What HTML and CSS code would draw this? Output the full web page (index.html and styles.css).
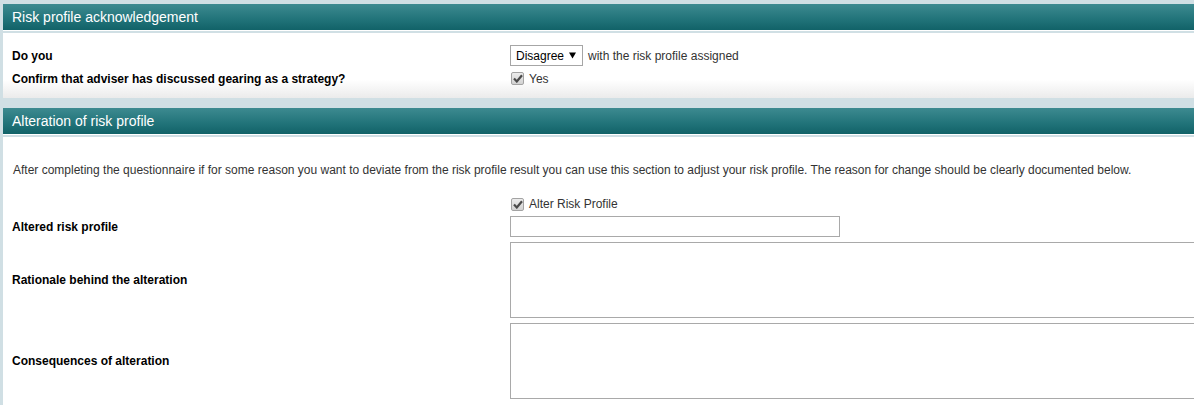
FILE: index.html
```html
<!DOCTYPE html>
<html lang="en">
<head>
<meta charset="utf-8">
<title>Risk profile</title>
<link rel="stylesheet" href="styles.css">
</head>
<body>
<div class="page">
  <section class="section">
    <h2 class="section-head">Risk profile acknowledgement</h2>
    <div class="panel panel-fade">
      <div class="form-grid grid-ack">
        <div class="label">Do you</div>
        <div class="value">
          <span class="select">Disagree <svg class="caret" width="7" height="7" viewBox="0 0 7 7"><path d="M0 0.5H7L3.5 6.5Z" fill="#000"/></svg></span>
          <span class="note">with the risk profile assigned</span>
        </div>
        <div class="label">Confirm that adviser has discussed gearing as a strategy?</div>
        <div class="value">
          <span class="check"><svg width="10" height="9" viewBox="0 0 10 9"><path d="M1 4.6L3.8 7.5L9 1.2" fill="none" stroke="#4a4a4a" stroke-width="2.2"/></svg></span>
          <span class="note">Yes</span>
        </div>
      </div>
    </div>
  </section>

  <section class="section section-second">
    <h2 class="section-head">Alteration of risk profile</h2>
    <div class="panel panel-last">
      <p class="intro">After completing the questionnaire if for some reason you want to deviate from the risk profile result you can use this section to adjust your risk profile. The reason for change should be clearly documented below.</p>
      <div class="form-grid grid-alt">
        <div class="label"></div>
        <div class="value">
          <span class="check"><svg width="10" height="9" viewBox="0 0 10 9"><path d="M1 4.6L3.8 7.5L9 1.2" fill="none" stroke="#4a4a4a" stroke-width="2.2"/></svg></span>
          <span class="note">Alter Risk Profile</span>
        </div>
        <div class="label">Altered risk profile</div>
        <div class="value"><span class="text-input"></span></div>
        <div class="label">Rationale behind the alteration</div>
        <div class="value"><span class="textarea"></span></div>
        <div class="label">Consequences of alteration</div>
        <div class="value"><span class="textarea"></span></div>
      </div>
    </div>
  </section>
</div>
</body>
</html>
```

FILE: styles.css
```css
html, body {
  margin: 0;
  padding: 0;
}
body {
  background: #d0dfe4;
  font-family: "Liberation Sans", Arial, sans-serif;
  font-size: 12px;
  color: #000;
  overflow: hidden;
  width: 1194px;
  height: 405px;
}
.page {
  padding: 4px 0 0 3px;
}
.section-second {
  margin-top: 10px;
}
.section-head {
  margin: 0;
  height: 26px;
  line-height: 26px;
  padding-left: 9px;
  font-size: 14px;
  font-weight: normal;
  color: #fff;
  background: linear-gradient(to bottom, #3d8a90 0%, #23757b 55%, #116268 100%);
  border-bottom: 1px solid #fff;
  margin-bottom: 2px;
}
.panel {
  background: #fff;
  padding-left: 9px;
}
.panel-fade {
  background: linear-gradient(to bottom, #fff 0%, #fff 72%, #ebebeb 100%);
  padding-top: 12px;
  padding-bottom: 10px;
}
.panel-last {
  padding-bottom: 6px;
}
.form-grid {
  display: grid;
  grid-template-columns: 498px 1fr;
  align-items: center;
}
.grid-ack {
  grid-template-rows: 21px 19px;
  row-gap: 3px;
}
.grid-alt {
  grid-template-rows: 14px 21px 76px 76px;
  row-gap: 5px;
}
.label {
  font-weight: bold;
  white-space: nowrap;
}
.value {
  display: flex;
  align-items: center;
  white-space: nowrap;
}
.note {
  color: #333;
}
.select {
  box-sizing: border-box;
  display: inline-flex;
  align-items: center;
  justify-content: space-between;
  width: 73px;
  height: 21px;
  padding: 0 6px 0 5px;
  border: 1px solid #a6a6a6;
  background: #fff;
  color: #000;
  margin-right: 5px;
}
.caret {
  display: block;
}
.check {
  box-sizing: border-box;
  display: inline-flex;
  align-items: center;
  justify-content: center;
  width: 13px;
  height: 13px;
  margin: 0 5px 0 1px;
  border: 1px solid #a3a3a3;
  border-radius: 2px;
  background: linear-gradient(to bottom, #ececec, #d2d2d2);
}
.intro {
  margin: 0;
  padding: 25px 0 19px 1px;
  line-height: 16px;
  color: #333;
  white-space: nowrap;
}
.text-input {
  box-sizing: border-box;
  display: block;
  width: 330px;
  height: 21px;
  border: 1px solid #a9a9a9;
  background: #fff;
}
.textarea {
  box-sizing: border-box;
  display: block;
  width: 720px;
  height: 76px;
  border: 1px solid #a9a9a9;
  background: #fff;
  flex: none;
}
```
